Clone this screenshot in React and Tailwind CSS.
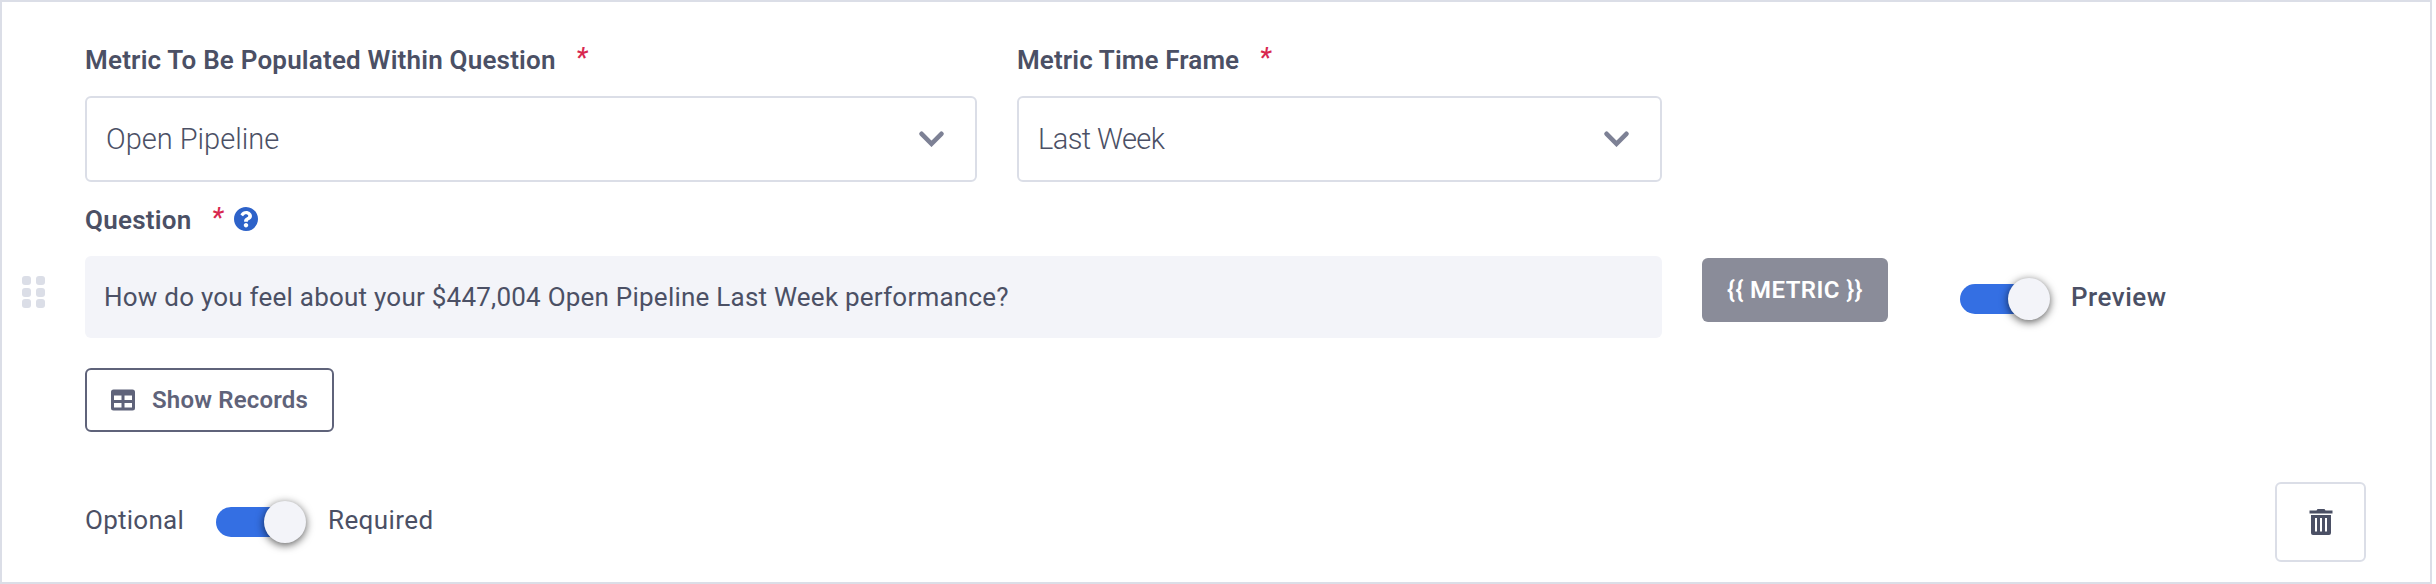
import { useState } from "react";

function Label({ children, className }) {
  return (
    <label className="flex items-center h-8 text-[26px] leading-8 font-semibold">
      <span className={className}>{children}</span>
      <span className="w-3 ml-5 pb-1 text-[#d8284f] text-[27px] font-medium italic">*</span>
    </label>
  );
}

function Select({ value, className, textClass }) {
  return (
    <div
      className={`${className} flex items-center justify-between h-[86px] pl-[19px] pr-[31px] border-2 border-[#dbdee7] rounded-md`}
    >
      <span className={`${textClass} text-[29px] leading-9 font-light`}>{value}</span>
      <svg width="25" height="16" viewBox="0 0 25 16" fill="none">
        <path
          d="M2.6 2.8 12.5 12.8 22.4 2.8"
          stroke="#7d8195"
          strokeWidth="4.6"
          strokeLinecap="round"
        />
      </svg>
    </div>
  );
}

function Toggle({ checked, onChange }) {
  return (
    <button
      type="button"
      role="switch"
      aria-checked={checked}
      onClick={() => onChange(!checked)}
      className={`flex items-center w-[86px] h-[30px] rounded-full ${
        checked ? "justify-end bg-[#346fe3]" : "justify-start bg-[#dbdee7]"
      }`}
    >
      <span className="-mr-1 w-[42px] h-[42px] shrink-0 rounded-full bg-[#f3f4f9] shadow-[0_2px_8px_rgba(0,0,0,0.65)]" />
    </button>
  );
}

export default function App() {
  const [preview, setPreview] = useState(true);
  const [required, setRequired] = useState(true);

  return (
    <div className="flex w-[2432px] h-[584px] border-2 border-[#dbdee7] bg-white font-[Roboto,sans-serif] text-[#4b5065]">
      {/* Drag handle */}
      <div className="grid grid-cols-2 gap-x-[5px] gap-y-[2.5px] content-start w-[83px] pl-5 pr-10 pt-[274px]">
        {[0, 1, 2, 3, 4, 5].map((dot) => (
          <span key={dot} className="w-[9px] h-[9px] rounded-[3px] bg-[#dbdee7]" />
        ))}
      </div>

      <div className="flex-1 pt-[42px] pr-16">
        {/* Metric selects */}
        <div className="flex gap-10">
          <div className="flex flex-col gap-5">
            <Label className="tracking-[0.2px]">Metric To Be Populated Within Question</Label>
            <Select value="Open Pipeline" className="w-[892px]" textClass="tracking-normal" />
          </div>
          <div className="flex flex-col gap-5">
            <Label className="tracking-[0.12px]">Metric Time Frame</Label>
            <Select value="Last Week" className="w-[645px]" textClass="tracking-[-0.6px]" />
          </div>
        </div>

        {/* Question */}
        <div className="flex items-center gap-2.5 mt-[22px]">
          <Label className="tracking-[0.25px]">Question</Label>
          <svg width="24" height="24" viewBox="8 8 496 496" fill="#2d62c9" className="mb-0.5">
            <path d="M504 256c0 136.997-111.043 248-248 248S8 392.997 8 256C8 119.083 119.043 8 256 8s248 111.083 248 248zM262.655 90c-54.497 0-89.255 22.957-116.549 63.758-3.536 5.286-2.353 12.415 2.715 16.258l34.699 26.31c5.205 3.947 12.621 3.008 16.665-2.122 17.864-22.658 30.113-35.797 57.303-35.797 20.429 0 45.698 13.148 45.698 32.958 0 14.976-12.363 22.667-32.534 33.976C247.128 238.528 216 254.941 216 296v4c0 6.627 5.373 12 12 12h56c6.627 0 12-5.373 12-12v-1.333c0-28.462 83.186-29.647 83.186-106.667 0-58.002-60.165-102-116.531-102zM256 338c-25.365 0-46 20.635-46 46 0 25.364 20.635 46 46 46s46-20.636 46-46c0-25.364-20.635-46-46-46z" />
          </svg>
        </div>
        <div className="flex mt-5">
          <div className="flex items-center w-[1577px] h-[82px] pl-[19px] pr-5 pt-px rounded-md bg-[#f3f4f9] text-[26px]">
            <span className="tracking-[0.23px]">
              How do you feel about your $447,004 Open Pipeline Last Week performance?
            </span>
          </div>
          <button
            type="button"
            className="flex items-center justify-center w-[186px] h-16 mt-0.5 ml-10 rounded-md bg-[#8a8c99] text-white text-2xl font-semibold"
          >
            <span className="tracking-[0.4px]">{"{{ METRIC }}"}</span>
          </button>
          <div className="flex items-center h-[86px] ml-[72px]">
            <Toggle checked={preview} onChange={setPreview} />
            <span className="ml-[25px] pb-1 text-[26px] leading-8 font-medium tracking-[0.5px]">Preview</span>
          </div>
        </div>

        <button
          type="button"
          className="flex items-center w-[249px] h-16 mt-[26px] pl-6 border-2 border-[#5f637a] rounded-md text-[#5f637a] text-2xl font-semibold"
        >
          <svg width="24" height="22" viewBox="0 0 24 22" className="mr-[17px]">
            <path
              fill="#5f637a"
              fillRule="evenodd"
              d="M2.5 0.5h19A2.5 2.5 0 0 1 24 3v16a2.5 2.5 0 0 1-2.5 2.5h-19A2.5 2.5 0 0 1 0 19V3A2.5 2.5 0 0 1 2.5 0.5zM3 6.5v4.5h7.5V6.5zM13.5 6.5v4.5H21V6.5zM3 14v4.5h7.5V14zM13.5 14v4.5H21V14z"
            />
          </svg>
          <span className="tracking-[0.18px]">Show Records</span>
        </button>

        {/* Footer */}
        <div className="flex items-center mt-[50px] text-[26px] leading-8">
          <span className="w-[131px] pb-1 tracking-[0.25px]">Optional</span>
          <Toggle checked={required} onChange={setRequired} />
          <span className="ml-[26px] pb-1 tracking-[0.4px]">Required</span>
          <button
            type="button"
            aria-label="Delete question"
            className="flex items-center justify-center w-[91px] h-20 ml-auto border-2 border-[#dbdee7] rounded-md"
          >
            <svg width="24" height="26" viewBox="0 0 24 26" fill="#4b5065">
              <path d="M0.5 1.5H7.5L8.5 0h7l1 1.5h7V4.5H0.5z" />
              <path
                fillRule="evenodd"
                d="M2 6h20v18a2 2 0 0 1-2 2H4a2 2 0 0 1-2-2zM6 9v13.5h2V9zM11 9v13.5h2V9zM16 9v13.5h2V9z"
              />
            </svg>
          </button>
        </div>
      </div>
    </div>
  );
}
